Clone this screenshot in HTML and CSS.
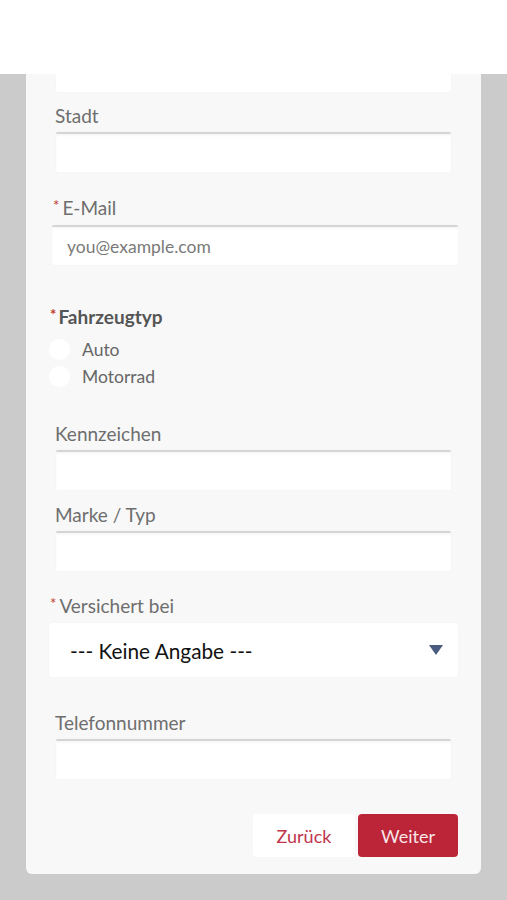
FILE: index.html
```html
<!DOCTYPE html>
<html lang="de">
<head>
<meta charset="utf-8">
<title>Formular</title>
<link rel="stylesheet" href="styles.css">
</head>
<body>
<header class="topbar"></header>
<main class="page">
  <form class="card">
    <div class="stub"></div>

    <div class="field field-stadt">
      <label class="label">Stadt</label>
      <div class="input"></div>
    </div>

    <div class="field field-mail">
      <label class="label"><span class="req">*</span>E-Mail</label>
      <div class="input input-wide"><span class="placeholder">you@example.com</span></div>
    </div>

    <div class="group">
      <div class="group-title"><span class="req">*</span>Fahrzeugtyp</div>
      <div class="radios">
        <div class="radio"><span class="dot"></span><span class="radio-label">Auto</span></div>
        <div class="radio"><span class="dot"></span><span class="radio-label">Motorrad</span></div>
      </div>
    </div>

    <div class="field field-kz">
      <label class="label">Kennzeichen</label>
      <div class="input"></div>
    </div>

    <div class="field field-marke">
      <label class="label">Marke / Typ</label>
      <div class="input"></div>
    </div>

    <div class="field field-vers">
      <label class="label label-req"><span class="req">*</span>Versichert bei</label>
      <div class="select">
        <span class="select-value">--- Keine Angabe ---</span>
        <svg class="caret" width="14" height="10" viewBox="0 0 14 10"><path d="M0 0 H14 L7 10 Z" fill="#4b5a7f"/></svg>
      </div>
    </div>

    <div class="field field-tel">
      <label class="label">Telefonnummer</label>
      <div class="input"></div>
    </div>

    <div class="actions">
      <button type="button" class="btn btn-back">Zurück</button>
      <button type="button" class="btn btn-next">Weiter</button>
    </div>
  </form>
</main>
</body>
</html>
```
FILE: styles.css
```css
* { box-sizing: border-box; }
html, body { margin: 0; padding: 0; }
body {
  background: #cbcbcb;
  font-family: Lato, "Open Sans", "Liberation Sans", sans-serif;
  width: 507px;
  height: 900px;
  overflow: hidden;
}
.topbar {
  height: 74px;
  background: #ffffff;
}
.page {
  padding: 0 26px;
}
.card {
  background: #f8f8f8;
  border-radius: 0 0 6px 6px;
  padding: 0 23px 17px 0;
  display: flex;
  flex-direction: column;
}
.stub {
  height: 18px;
  margin: 0 7px 0 30px;
  background: #ffffff;
  border-radius: 0 0 3px 3px;
  box-shadow: 0 0 2px rgba(0,0,0,0.04);
}
.field {
  display: flex;
  flex-direction: column;
}
.label {
  font-size: 19px;
  line-height: 22px;
  color: #6e6e6e;
  padding-left: 29px;
  height: 22px;
}
.req {
  color: #c0392b;
  font-size: 15px;
  line-height: 12px;
  vertical-align: top;
  position: relative;
  top: 2px;
  margin-right: 3px;
}
.input {
  height: 40px;
  margin: 5px 7px 0 30px;
  background: #ffffff;
  border-top: 2px solid #d5d5d5;
  border-radius: 2px;
  box-shadow: inset 0 2px 2px rgba(0,0,0,0.03), 0 0 2px rgba(0,0,0,0.04);
  display: flex;
  align-items: center;
}
.input-wide {
  margin: 5px 0 0 26px;
  padding-left: 15px;
}
.placeholder {
  font-size: 17.5px;
  color: #7a7a7a;
}
.field-stadt { margin-top: 13px; }
.field-mail { margin-top: 25px; }
.field-mail .label { padding-left: 27px; }
.field-mail .input { margin-top: 6px; }
.field-kz { margin-top: 33px; }
.field-marke { margin-top: 14px; }
.field-vers { margin-top: 24px; }
.field-vers .label { padding-left: 24px; }
.field-tel { margin-top: 35px; }
.field-tel .input { margin-top: 5px; }

.group {
  margin-top: 41px;
  display: flex;
  flex-direction: column;
}
.group-title {
  font-size: 19px;
  line-height: 22px;
  font-weight: 700;
  color: #555555;
  padding-left: 24px;
}
.group-title .req { margin-right: 2px; }
.radios {
  margin-top: 8px;
  display: flex;
  flex-direction: column;
}
.radio {
  height: 27px;
  display: flex;
  align-items: center;
  padding-left: 23px;
}
.dot {
  width: 21px;
  height: 21px;
  border-radius: 50%;
  background: #ffffff;
  margin-right: 12px;
}
.radio-label {
  font-size: 17.5px;
  color: #666666;
}

.select {
  height: 54px;
  margin: 6px 0 0 23px;
  background: #ffffff;
  border-radius: 4px;
  box-shadow: 0 0 2px rgba(0,0,0,0.04);
  display: flex;
  align-items: center;
  justify-content: space-between;
  padding: 0 15px 0 21px;
}
.select-value {
  font-size: 20.8px;
  color: #111111;
}
.caret { display: block; }

.actions {
  margin-top: 35px;
  display: flex;
  justify-content: flex-end;
  gap: 3px;
}
.btn {
  height: 43px;
  border: none;
  border-radius: 4px;
  font-family: Lato, "Open Sans", "Liberation Sans", sans-serif;
  font-size: 18px;
  cursor: pointer;
}
.btn-back {
  width: 102px;
  background: #ffffff;
  color: #c0354c;
}
.btn-next {
  width: 100px;
  background: #bc2438;
  color: #f6e6e8;
}
```
